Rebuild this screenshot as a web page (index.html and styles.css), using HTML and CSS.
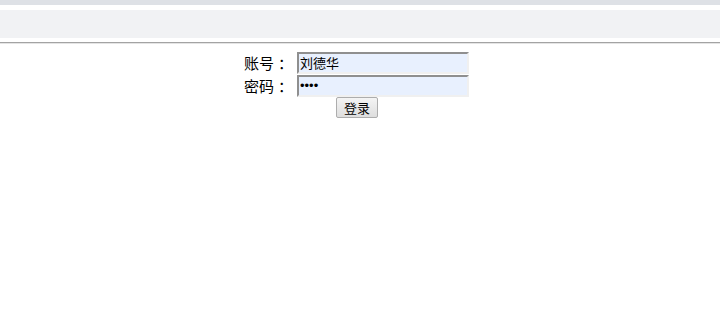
FILE: index.html
```html
<!DOCTYPE html>
<html lang="zh">
<head>
  <meta charset="UTF-8" />
  <title>登录</title>
  <link rel="stylesheet" href="styles.css">
</head>
<body>
  <div class="topbar"></div>
  <div class="toolbar"></div>
  <hr class="divider">
  <form class="login-form">
    <div class="row">
      <label for="account">账号<span class="colon">：</span></label>
      <input type="text" id="account" class="field" value="刘德华">
    </div>
    <div class="row">
      <label for="pwd">密码<span class="colon">：</span></label>
      <input type="password" id="pwd" class="field pwd" value="1234">
    </div>
    <div class="row btn-row">
      <button type="submit" class="btn">登录</button>
    </div>
  </form>
</body>
</html>
```

FILE: styles.css
```css
body {
  margin: 0;
  font-family: "Noto Sans CJK SC", "Liberation Sans", sans-serif;
  background: #fff;
}

.topbar {
  height: 5px;
  background: #dee1e6;
}

.toolbar {
  height: 28px;
  margin-top: 5px;
  background: #f1f2f4;
}

.divider {
  margin: 4px 0 0 0;
  border: none;
  border-top: 1px solid #a3a3a3;
  border-bottom: 1px solid #e4e4e4;
  height: 0;
}

.login-form {
  margin-top: 7px;
  font-size: 15px;
  color: #000;
}

.row {
  display: flex;
  justify-content: center;
  align-items: center;
  height: 23px;
  padding-right: 7px;
}

.row label {
  width: 53px;
  line-height: 20px;
}

.colon {
  padding-left: 4px;
}

.field {
  box-sizing: border-box;
  width: 172px;
  height: 22px;
  margin: 0;
  padding: 1px 1px;
  border: 2px solid;
  border-top-color: #8f8f8f;
  border-left-color: #8f8f8f;
  border-right-color: #f0f0f0;
  border-bottom-color: #f0f0f0;
  background: #e8f0fe;
  font-family: "Noto Sans CJK SC", "Liberation Sans", sans-serif;
  font-size: 13px;
  color: #000;
  outline: none;
}

.pwd {
  font-family: "Liberation Sans", sans-serif;
}

.btn-row {
  padding-right: 0;
  margin-left: -6px;
  align-items: flex-start;
}

.btn {
  box-sizing: border-box;
  width: 42px;
  height: 21px;
  margin: 0;
  padding: 0;
  border: 1px solid #adadad;
  border-radius: 2px;
  background: linear-gradient(#f4f4f4, #dedede);
  font-family: "Noto Sans CJK SC", "Liberation Sans", sans-serif;
  font-size: 13px;
  color: #000;
}
```
